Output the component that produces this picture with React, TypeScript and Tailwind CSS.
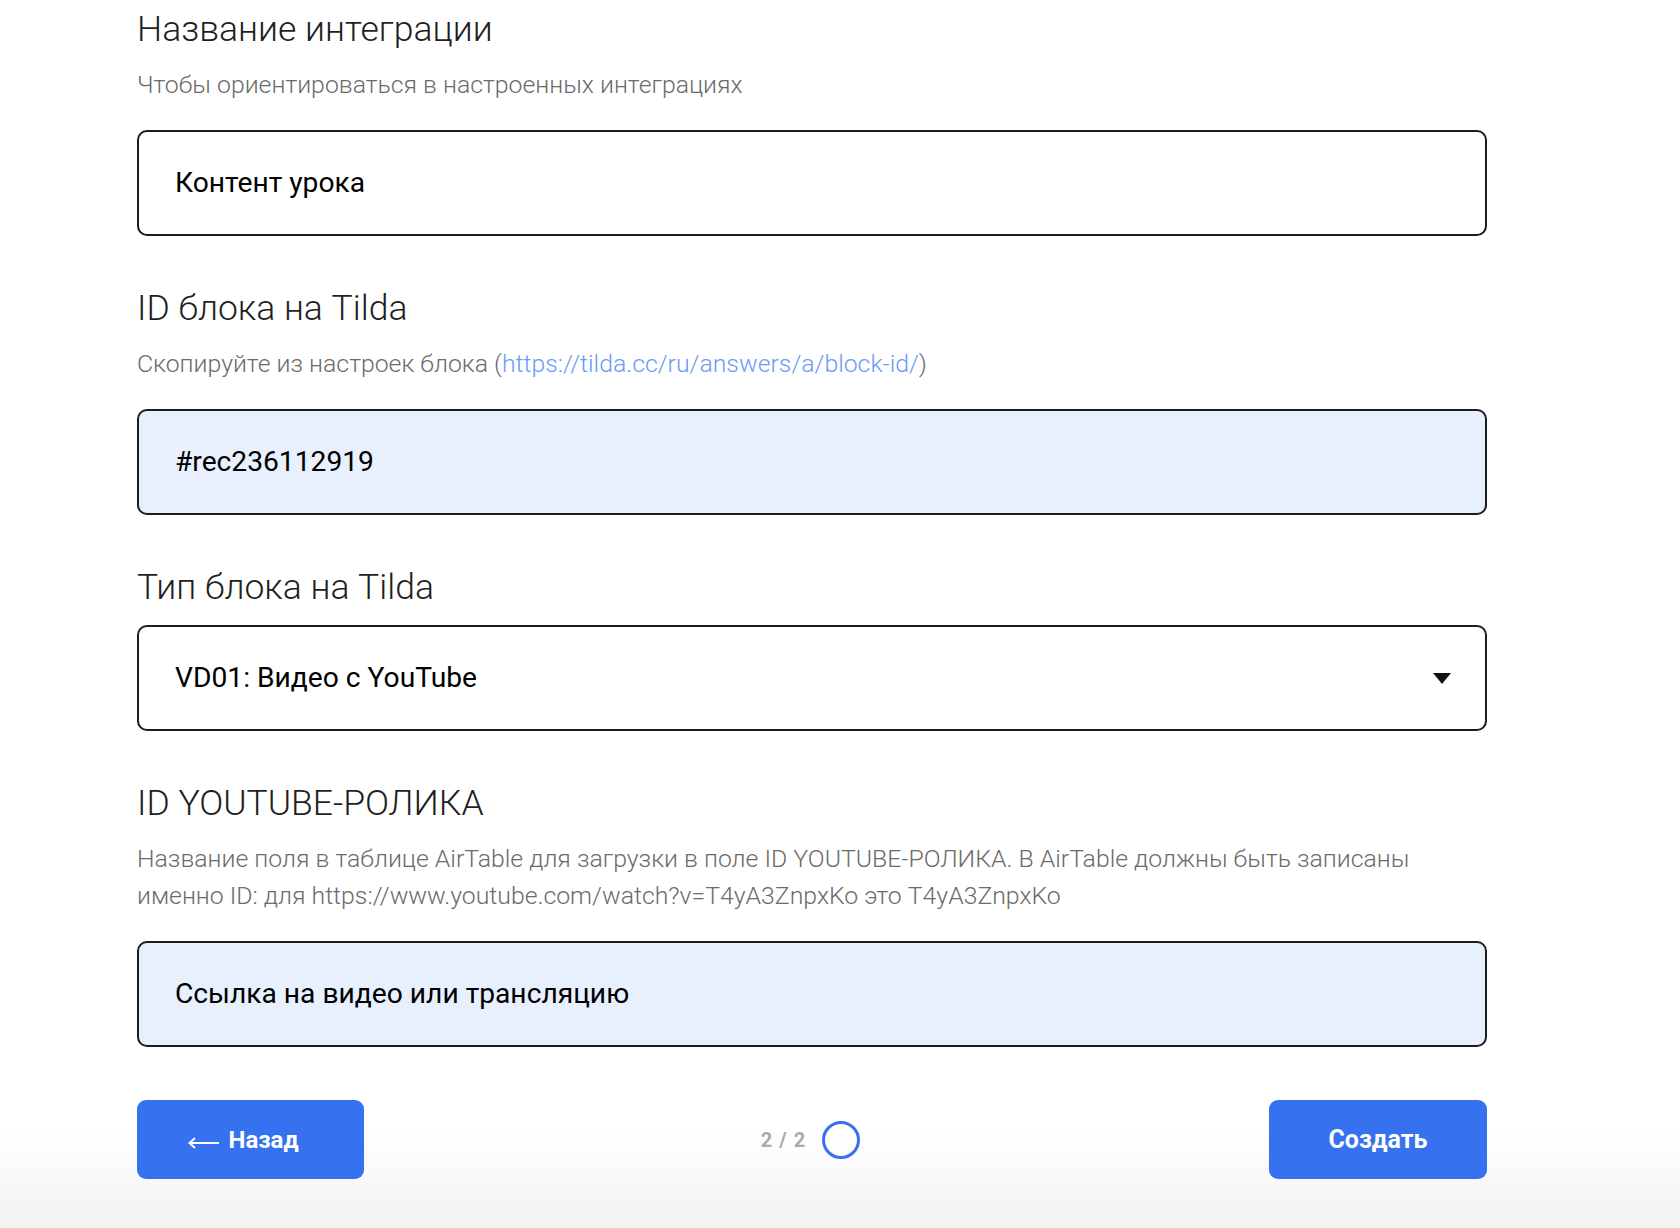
import { ReactNode } from "react";

function Section({
  title,
  hint,
  children,
}: {
  title: string;
  hint?: ReactNode;
  children: ReactNode;
}) {
  return (
    <div className="flex flex-col">
      <h2 className="text-[35.5px] leading-[40px] font-light text-[#1f1f1f]">{title}</h2>
      {hint && (
        <p className="mt-[17px] text-[24.8px] leading-[37px] font-light text-[#6b6b6b]">{hint}</p>
      )}
      <div className={hint ? "mt-[27px]" : "mt-[18px]"}>{children}</div>
    </div>
  );
}

function Field({ value, filled }: { value: string; filled?: boolean }) {
  return (
    <div
      className={
        "h-[106px] rounded-[10px] border-2 border-[#1c1c1c] flex items-center px-[36px] " +
        (filled ? "bg-[#e8effd]" : "bg-white")
      }
    >
      <span className="text-[28.2px] font-normal text-black">{value}</span>
    </div>
  );
}

export default function App() {
  return (
    <div
      className="min-h-[1228px] w-full bg-[linear-gradient(to_bottom,#ffffff_1130px,#f2f2f2_1228px)]"
      style={{ fontFamily: "Roboto, 'Noto Sans', sans-serif" }}
    >
      <div className="ml-[137px] w-[1350px] pt-[9px] flex flex-col gap-[52px]">
        <Section title="Название интеграции" hint="Чтобы ориентироваться в настроенных интеграциях">
          <Field value="Контент урока" />
        </Section>

        <Section
          title="ID блока на Tilda"
          hint={
            <>
              Скопируйте из настроек блока (
              <a className="text-[#6b9bf5]" href="#">
                https://tilda.cc/ru/answers/a/block-id/
              </a>
              )
            </>
          }
        >
          <Field value="#rec236112919" filled />
        </Section>

        <Section title="Тип блока на Tilda">
          <div className="h-[106px] rounded-[10px] border-2 border-[#1c1c1c] bg-white flex items-center justify-between pl-[36px] pr-[34px]">
            <span className="text-[28.2px] font-normal text-black">VD01: Видео с YouTube</span>
            <svg width="18" height="11" viewBox="0 0 18 11">
              <path d="M0 0 L18 0 L9 11 Z" fill="#111" />
            </svg>
          </div>
        </Section>

        <Section
          title="ID YOUTUBE-РОЛИКА"
          hint={
            <>
              Название поля в таблице AirTable для загрузки в поле ID YOUTUBE-РОЛИКА. В AirTable должны быть записаны
              <br />
              именно ID: для https://www.youtube.com/watch?v=T4yA3ZnpxKo это T4yA3ZnpxKo
            </>
          }
        >
          <Field value="Ссылка на видео или трансляцию" filled />
        </Section>

        <div className="flex items-center justify-between pt-[1px]">
          <button className="h-[79px] w-[227px] rounded-[9px] bg-[#3671f0] text-white flex items-center justify-center gap-[8px] pr-[14px]">
            <svg width="32" height="14" viewBox="0 0 32 14" className="mt-[6px]">
              <path d="M31 7 H2 M7 2 L1.5 7 L7 12" fill="none" stroke="#fff" strokeWidth="2" />
            </svg>
            <span className="text-[24px] font-bold">Назад</span>
          </button>
          <div className="flex items-center gap-[16px] -ml-[12px]">
            <span className="text-[20px] font-bold text-[#aaaaaa] tracking-[1px]">2 / 2</span>
            <div className="w-[38px] h-[38px] rounded-full border-[3px] border-[#3671f0]" />
          </div>
          <button className="h-[79px] w-[218px] rounded-[9px] bg-[#3671f0] text-white text-[25px] font-bold">
            Создать
          </button>
        </div>
      </div>
    </div>
  );
}
